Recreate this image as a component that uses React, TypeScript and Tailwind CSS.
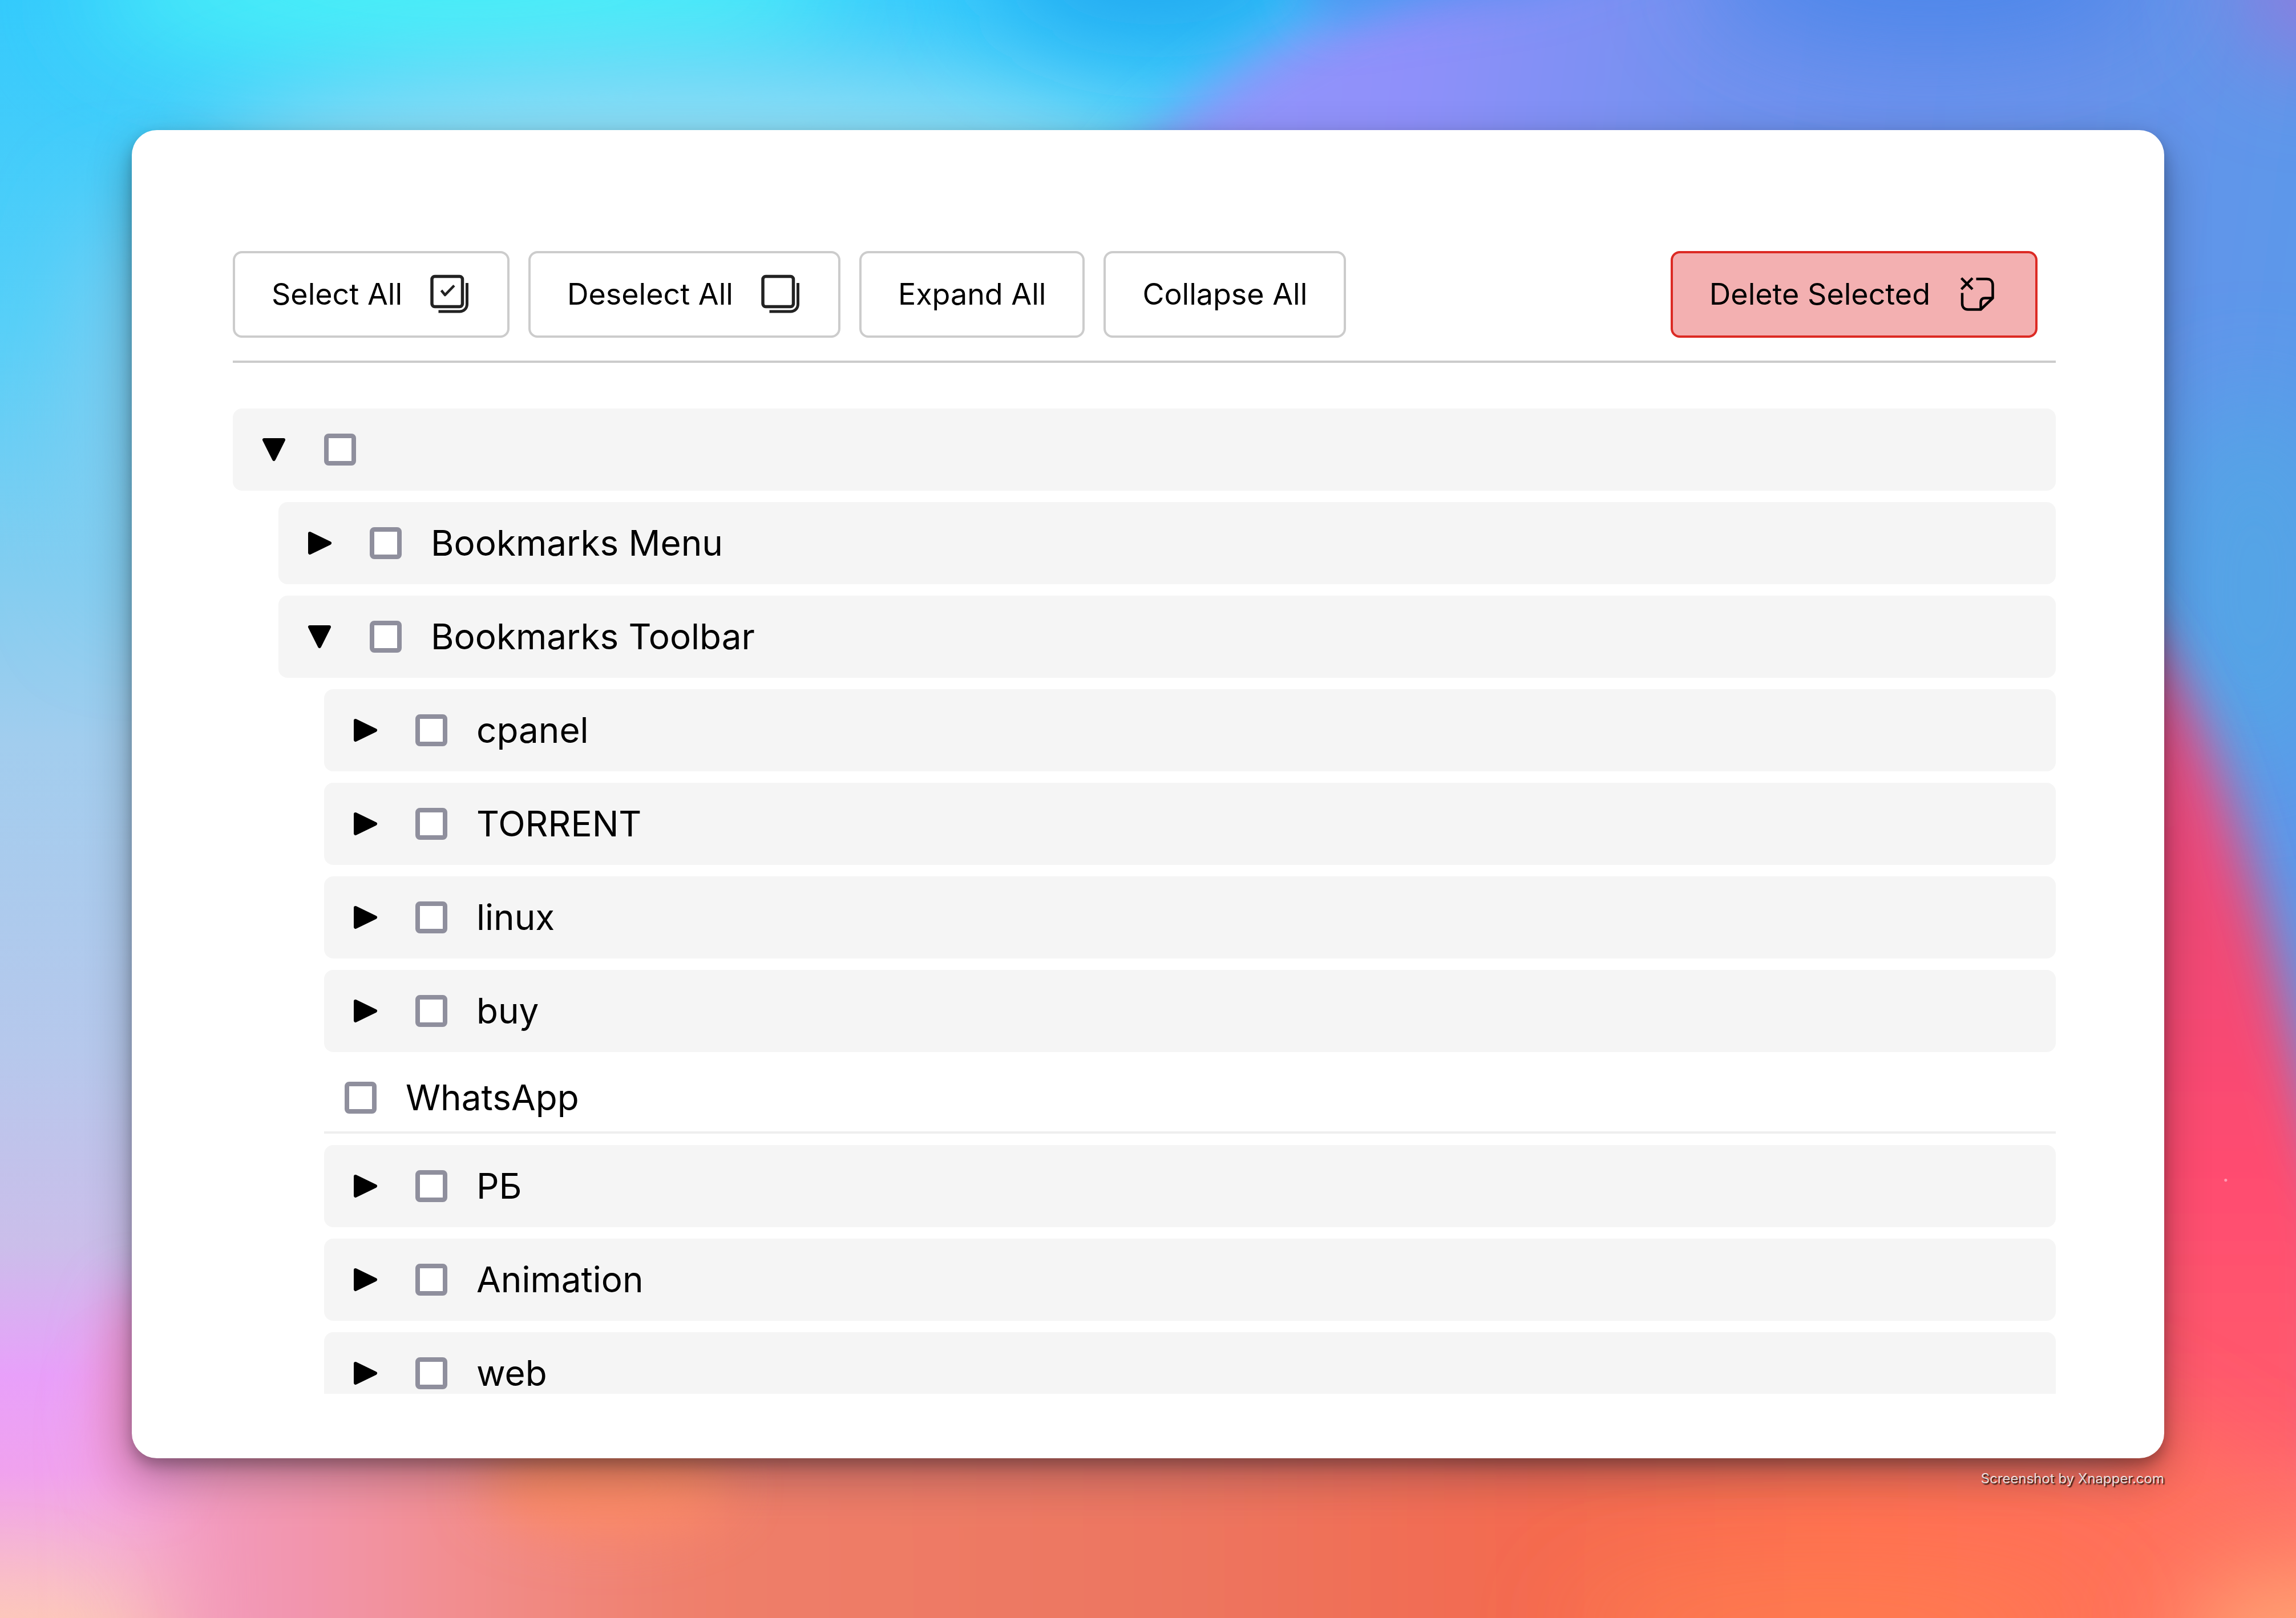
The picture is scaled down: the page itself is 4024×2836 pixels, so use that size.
import { useState, type ReactNode } from "react";
import clsx from "clsx";

type Bookmark = { id: string; title: string; children?: Bookmark[] };

const bookmarks: Bookmark[] = [
  {
    id: "root",
    title: "",
    children: [
      { id: "menu", title: "Bookmarks Menu", children: [] },
      {
        id: "toolbar",
        title: "Bookmarks Toolbar",
        children: [
          { id: "cpanel", title: "cpanel", children: [] },
          { id: "torrent", title: "TORRENT", children: [] },
          { id: "linux", title: "linux", children: [] },
          { id: "buy", title: "buy", children: [] },
          { id: "whatsapp", title: "WhatsApp" },
          { id: "rb", title: "РБ", children: [] },
          { id: "animation", title: "Animation", children: [] },
          { id: "web", title: "web", children: [] },
        ],
      },
    ],
  },
];

const allIds = (nodes: Bookmark[]): string[] =>
  nodes.flatMap((n) => [n.id, ...allIds(n.children ?? [])]);

function Wallpaper() {
  return (
    <svg
      aria-hidden="true"
      className="absolute inset-0 -z-10 h-full w-full"
      viewBox="0 0 1568 1105"
      preserveAspectRatio="none"
    >
      <defs>
        <linearGradient id="sky" x1="0" y1="0" x2="0" y2="1">
          <stop offset="0" stopColor="#35cafc" />
          <stop offset=".2" stopColor="#55cff8" />
          <stop offset=".36" stopColor="#84cdf0" />
          <stop offset=".46" stopColor="#a2cdee" />
          <stop offset=".65" stopColor="#b6c8ec" />
          <stop offset=".77" stopColor="#cbbeea" />
          <stop offset=".85" stopColor="#e8a0fa" />
          <stop offset=".91" stopColor="#f0a2ee" />
          <stop offset="1" stopColor="#fbc6bc" />
        </linearGradient>
        <linearGradient id="blue" gradientUnits="userSpaceOnUse" x1="780" y1="100" x2="1568" y2="200">
          <stop offset="0" stopColor="#9396fb" />
          <stop offset=".22" stopColor="#8f90fa" />
          <stop offset=".5" stopColor="#7091ee" />
          <stop offset=".8" stopColor="#6892ea" />
          <stop offset="1" stopColor="#5c98ea" />
        </linearGradient>
        <linearGradient id="warm" gradientUnits="userSpaceOnUse" x1="80" y1="0" x2="1568" y2="0">
          <stop offset="0" stopColor="#f39cc8" />
          <stop offset=".08" stopColor="#f296b0" />
          <stop offset=".17" stopColor="#f28c88" />
          <stop offset=".26" stopColor="#ef7f6a" />
          <stop offset=".48" stopColor="#ec7660" />
          <stop offset=".64" stopColor="#f36a50" />
          <stop offset=".8" stopColor="#ff7050" />
          <stop offset="1" stopColor="#ff7060" />
        </linearGradient>
        <linearGradient id="red" gradientUnits="userSpaceOnUse" x1="0" y1="430" x2="0" y2="1105">
          <stop offset="0" stopColor="#e8508a" />
          <stop offset=".3" stopColor="#f04876" />
          <stop offset=".55" stopColor="#ff4c70" />
          <stop offset=".8" stopColor="#ff5c6c" />
          <stop offset="1" stopColor="#ff8a70" />
        </linearGradient>
        <filter id="b18" filterUnits="userSpaceOnUse" x="-200" y="-200" width="1968" height="1505">
          <feGaussianBlur stdDeviation="18" />
        </filter>
        <filter id="b35" filterUnits="userSpaceOnUse" x="-200" y="-200" width="1968" height="1505">
          <feGaussianBlur stdDeviation="35" />
        </filter>
      </defs>
      <rect width="1568" height="1105" fill="url(#sky)" />
      <ellipse cx="320" cy="-5" rx="260" ry="55" fill="#48f0f8" filter="url(#b35)" />
      <ellipse cx="470" cy="120" rx="330" ry="75" fill="#92def5" filter="url(#b35)" />
      <ellipse cx="90" cy="280" rx="30" ry="140" fill="#86cdf0" filter="url(#b35)" />
      <ellipse cx="790" cy="-20" rx="110" ry="50" fill="#20a8f0" filter="url(#b35)" />
      <path
        d="M730 170C775 95 830 50 900 15C960 -10 1010 -40 1060 -80H1700V1000H1000Z"
        fill="url(#blue)"
        filter="url(#b18)"
      />
      <path d="M880 -50H1160L1050 -10L900 12Z" fill="#5090f0" filter="url(#b18)" />
      <ellipse cx="1320" cy="-20" rx="150" ry="50" fill="#4c86ea" filter="url(#b35)" />
      <ellipse cx="1590" cy="-10" rx="60" ry="50" fill="#9478dc" filter="url(#b35)" />
      <ellipse cx="1540" cy="400" rx="70" ry="130" fill="#55a4e6" filter="url(#b35)" />
      <path
        d="M1440 400C1500 460 1528 560 1550 640C1566 700 1580 760 1600 840V1200H1440Z"
        fill="url(#red)"
        filter="url(#b18)"
      />
      <path
        d="M110 1220C110 1080 110 1010 100 960H1440L1530 1010L1640 1080V1220Z"
        fill="url(#warm)"
        filter="url(#b35)"
      />
      <ellipse cx="95" cy="950" rx="25" ry="70" fill="#f092cc" filter="url(#b18)" />
      <ellipse cx="415" cy="1015" rx="85" ry="32" fill="#fc8a66" filter="url(#b18)" />
      <ellipse cx="1250" cy="1110" rx="180" ry="25" fill="#ff8050" filter="url(#b35)" />
      <ellipse cx="1570" cy="1120" rx="80" ry="40" fill="#ffae78" filter="url(#b35)" />
      <ellipse cx="0" cy="1125" rx="40" ry="20" fill="#ffc8b8" filter="url(#b35)" />
      <circle cx="1520" cy="806" r="1" fill="#ff9ab4" />
    </svg>
  );
}

function SelectAllIcon() {
  return (
    <svg aria-hidden="true" className="size-18" viewBox="32 20 72 72" fill="none" stroke="#222" strokeWidth="5.5" strokeLinejoin="round">
      <rect x="36" y="24.5" width="53.5" height="53" rx="5" />
      <path d="M97.500 36V73C97.500 80.500 92 86 84.500 86H47.500" strokeWidth="5" />
      <path d="M52.500 49L59 57L75 40.500" strokeWidth="4.5" />
    </svg>
  );
}

function DeselectAllIcon() {
  return (
    <svg aria-hidden="true" className="size-18" viewBox="32 20 72 72" fill="none" stroke="#222" strokeWidth="5.5" strokeLinejoin="round">
      <rect x="36" y="24.5" width="53.5" height="53" rx="5" />
      <path d="M97.500 36V73C97.500 80.500 92 86 84.500 86H47.500" strokeWidth="5" />
    </svg>
  );
}

function DeleteIcon() {
  return (
    <svg aria-hidden="true" className="size-18" viewBox="19 15 72 72" fill="none" stroke="#000" strokeWidth="4.5" strokeLinejoin="round">
      <path d="M25.500 22.500L45 42M45 22.500L25.500 42" />
      <path d="M51.500 24H70C76.500 24 80.500 28 80.500 34.500V57.500L59.500 77.500H37C31 77.500 27 73.500 27 67V48.500" />
      <path d="M59.500 77.500V65C59.500 60 62 57.500 67 57.500H80.500" />
    </svg>
  );
}

function Arrow({ open }: { open: boolean }) {
  return (
    <svg
      aria-hidden="true"
      className="size-11"
      viewBox="0 0 44 44"
      fill="#000"
      stroke="#000"
      strokeWidth="6"
      strokeLinejoin="round"
    >
      <path d={open ? "M5 5H39L22 39Z" : "M5 5L40 22L5 39Z"} />
    </svg>
  );
}

function ToolButton({
  children,
  icon,
  danger,
  onClick,
}: {
  children: ReactNode;
  icon?: ReactNode;
  danger?: boolean;
  onClick?: () => void;
}) {
  return (
    <button
      type="button"
      onClick={onClick}
      className={clsx(
        "flex h-38 items-center gap-12 rounded-2xl border-4 px-16 text-[52px] leading-none whitespace-nowrap text-black",
        danger ? "border-[#dc2a24] bg-[#f3b0b1]" : "border-[#ccc] bg-white",
      )}
    >
      <span>{children}</span>
      {icon}
    </button>
  );
}

type TreeProps = {
  nodes: Bookmark[];
  open: Set<string>;
  selected: Set<string>;
  toggleOpen: (id: string) => void;
  toggleSelected: (id: string) => void;
};

function Tree({ nodes, ...rest }: TreeProps) {
  const { open, selected, toggleOpen, toggleSelected } = rest;
  return (
    <ul className="flex flex-col gap-5">
      {nodes.map((node) => {
        const label = (
          <label className="flex items-center gap-[51px] text-[62px] leading-none text-black">
            <input
              type="checkbox"
              aria-label={node.title || "All bookmarks"}
              checked={selected.has(node.id)}
              onChange={() => toggleSelected(node.id)}
              className="size-14 shrink-0 appearance-none rounded-lg border-8 border-[#8f8f9d] bg-white checked:bg-[#0060df]"
            />
            <span>{node.title}</span>
          </label>
        );
        if (!node.children) {
          return (
            <li key={node.id} className="flex h-[123px] items-center border-b-4 border-[#eee] pl-9">
              {label}
            </li>
          );
        }
        return (
          <li key={node.id} className="flex flex-col gap-5">
            <div className="flex h-36 items-center rounded-2xl bg-[#f5f5f5] pl-[50px]">
              <button
                type="button"
                aria-expanded={open.has(node.id)}
                aria-label={`Toggle ${node.title || "all bookmarks"}`}
                onClick={() => toggleOpen(node.id)}
                className="mr-[66px]"
              >
                <Arrow open={open.has(node.id)} />
              </button>
              {label}
            </div>
            {open.has(node.id) && node.children.length > 0 && (
              <div className="pl-20">
                <Tree nodes={node.children} {...rest} />
              </div>
            )}
          </li>
        );
      })}
    </ul>
  );
}

const toggled = (set: Set<string>, id: string) => {
  const next = new Set(set);
  if (!next.delete(id)) next.add(id);
  return next;
};

export default function App() {
  const [open, setOpen] = useState(() => new Set(["root", "toolbar"]));
  const [selected, setSelected] = useState(() => new Set<string>());

  return (
    <div className="relative isolate flex h-screen flex-col overflow-hidden px-[231px] pt-[228px] font-['Inter',sans-serif]">
      <Wallpaper />
      <main className="flex min-h-0 flex-1 flex-col rounded-[44px] bg-white pt-[212px] pr-[190px] pb-[113px] pl-[177px] shadow-[0_32px_80px_rgba(0,0,0,0.3),0_12px_24px_rgba(0,0,0,0.25)]">
        <div className="flex gap-[33px] border-b-4 border-[#ccc] pr-8 pb-10">
          <ToolButton icon={<SelectAllIcon />} onClick={() => setSelected(new Set(allIds(bookmarks)))}>
            Select All
          </ToolButton>
          <ToolButton icon={<DeselectAllIcon />} onClick={() => setSelected(new Set())}>
            Deselect All
          </ToolButton>
          <ToolButton onClick={() => setOpen(new Set(allIds(bookmarks)))}>Expand All</ToolButton>
          <ToolButton onClick={() => setOpen(new Set())}>Collapse All</ToolButton>
          <div className="ml-auto">
            <ToolButton danger icon={<DeleteIcon />}>
              Delete Selected
            </ToolButton>
          </div>
        </div>
        <div className="mt-20 min-h-0 flex-1 overflow-hidden">
          <Tree
            nodes={bookmarks}
            open={open}
            selected={selected}
            toggleOpen={(id) => setOpen((s) => toggled(s, id))}
            toggleSelected={(id) => setSelected((s) => toggled(s, id))}
          />
        </div>
      </main>
      <footer className="flex h-[280px] items-start justify-end pt-5 text-2xl text-white/80 [text-shadow:2px_2px_2px_rgba(0,0,0,0.9)]">
        Screenshot by Xnapper.com
      </footer>
    </div>
  );
}
